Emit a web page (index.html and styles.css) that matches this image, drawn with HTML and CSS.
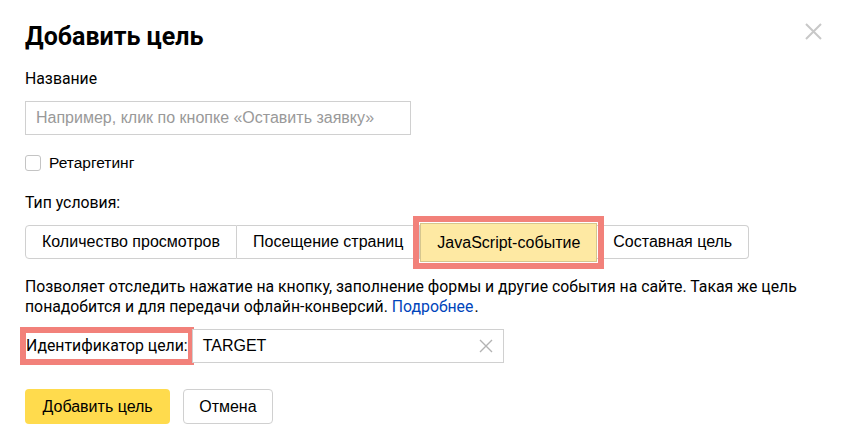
FILE: index.html
```html
<!DOCTYPE html>
<html lang="ru">
<head>
  <meta charset="UTF-8" />
  <title>Добавить цель</title>
  <link rel="stylesheet" href="styles.css">
</head>
<body>
  <div class="dialog">
    <button class="close" title="Закрыть">
      <svg width="17" height="17" viewBox="0 0 17 17"><path d="M1 1L16 16M16 1L1 16" stroke="#c8c8c8" stroke-width="2" fill="none"/></svg>
    </button>

    <h1 class="title">Добавить цель</h1>

    <div class="label">Название</div>
    <input class="input name-input" type="text" placeholder="Например, клик по кнопке «Оставить заявку»" />

    <label class="check">
      <span class="check-box"></span>
      <span class="check-text">Ретаргетинг</span>
    </label>

    <div class="label type-label">Тип условия:</div>
    <div class="radio-group">
      <button class="radio">Количество просмотров</button>
      <button class="radio">Посещение страниц</button>
      <button class="radio checked">JavaScript-событие</button>
      <button class="radio">Составная цель</button>
    </div>

    <p class="hint">Позволяет отследить нажатие на кнопку, заполнение формы и другие события на сайте. Такая же цель понадобится и для передачи офлайн-конверсий. <a href="#">Подробнее</a>.</p>

    <div class="target-row">
      <span class="target-label">Идентификатор цели:</span>
      <div class="input target-input">
        <span class="target-value">TARGET</span>
        <svg class="clear" width="14" height="14" viewBox="0 0 14 14"><path d="M1 1L13 13M13 1L1 13" stroke="#b3b3b3" stroke-width="1.4" fill="none"/></svg>
      </div>
    </div>

    <div class="actions">
      <button class="btn btn-action">Добавить цель</button>
      <button class="btn btn-cancel">Отмена</button>
    </div>
  </div>
</body>
</html>
```

FILE: styles.css
```css
body {
  margin: 0;
  background: #fff;
  color: #000;
  font-family: Roboto, "Noto Sans", sans-serif;
  font-size: 15.8px;
}

.dialog {
  position: relative;
  padding: 22px 25px 20px;
}

.close {
  position: absolute;
  top: 23px;
  right: 20px;
  padding: 0;
  border: none;
  background: none;
  line-height: 0;
  cursor: pointer;
}

.title {
  margin: 0;
  font-size: 25px;
  line-height: 30px;
  font-weight: bold;
}

.label {
  line-height: 20px;
  margin-top: 17px;
}

.input {
  box-sizing: border-box;
  height: 34px;
  border: 1px solid #d0d0d0;
  background: #fff;
  font-family: "Liberation Sans", Arial, sans-serif;
  font-size: 16px;
}

.name-input {
  display: block;
  width: 386px;
  margin-top: 12px;
  padding: 0 10px;
  outline: none;
}

.name-input::placeholder {
  color: #999;
}

.check {
  display: flex;
  align-items: center;
  gap: 8px;
  height: 20px;
  margin-top: 18px;
}

.check-box {
  box-sizing: border-box;
  width: 16px;
  height: 16px;
  border: 1px solid #c4c4c4;
  border-radius: 3px;
}

.check-text {
  font-family: "Liberation Sans", Arial, sans-serif;
  font-size: 15.5px;
}

.type-label {
  margin-top: 20px;
}

.radio-group {
  display: flex;
  margin-top: 12px;
  height: 34px;
}

.radio {
  box-sizing: border-box;
  height: 34px;
  padding: 0 16px;
  border: 1px solid #d0d0d0;
  border-left: none;
  background: #fff;
  font-family: "Liberation Sans", Arial, sans-serif;
  font-size: 16px;
  color: #000;
}

.radio:first-child {
  border-left: 1px solid #d0d0d0;
  border-radius: 4px 0 0 4px;
}

.radio:last-child {
  border-radius: 0 4px 4px 0;
}

/* выбранный вариант обведён красной рамкой */
.radio.checked {
  position: relative;
  height: 39px;
  margin: -2px 0 -3px;
  padding: 0 16px;
  border: 1px solid #d6c68e;
  background: #fee9a3;
  outline: 6px solid #f2817a;
  outline-offset: 1px;
}

.hint {
  margin: 18px 0 0;
  line-height: 20px;
  width: 800px;
}

.hint a {
  margin-right: 1px;
  color: #04b;
  text-decoration: none;
}

.target-row {
  display: flex;
  align-items: center;
  margin-top: 12px;
}

.target-label {
  margin-left: 1px;
  line-height: 26px;
  background: #fff;
  outline: 6px solid #f2817a;
}

.target-input {
  display: flex;
  align-items: center;
  justify-content: space-between;
  width: 312px;
  margin-left: 4px;
  padding: 0 10px;
}

.actions {
  display: flex;
  gap: 13px;
  margin-top: 26px;
}

.btn {
  box-sizing: border-box;
  height: 35px;
  border-radius: 4px;
  font-family: "Liberation Sans", Arial, sans-serif;
  font-size: 16px;
  color: #000;
  cursor: pointer;
}

.btn-action {
  padding: 0 17.5px;
  border: none;
  background: #ffdb4d;
}

.btn-cancel {
  padding: 0 15px;
  border: 1px solid #d0d0d0;
  background: #fff;
}
```
